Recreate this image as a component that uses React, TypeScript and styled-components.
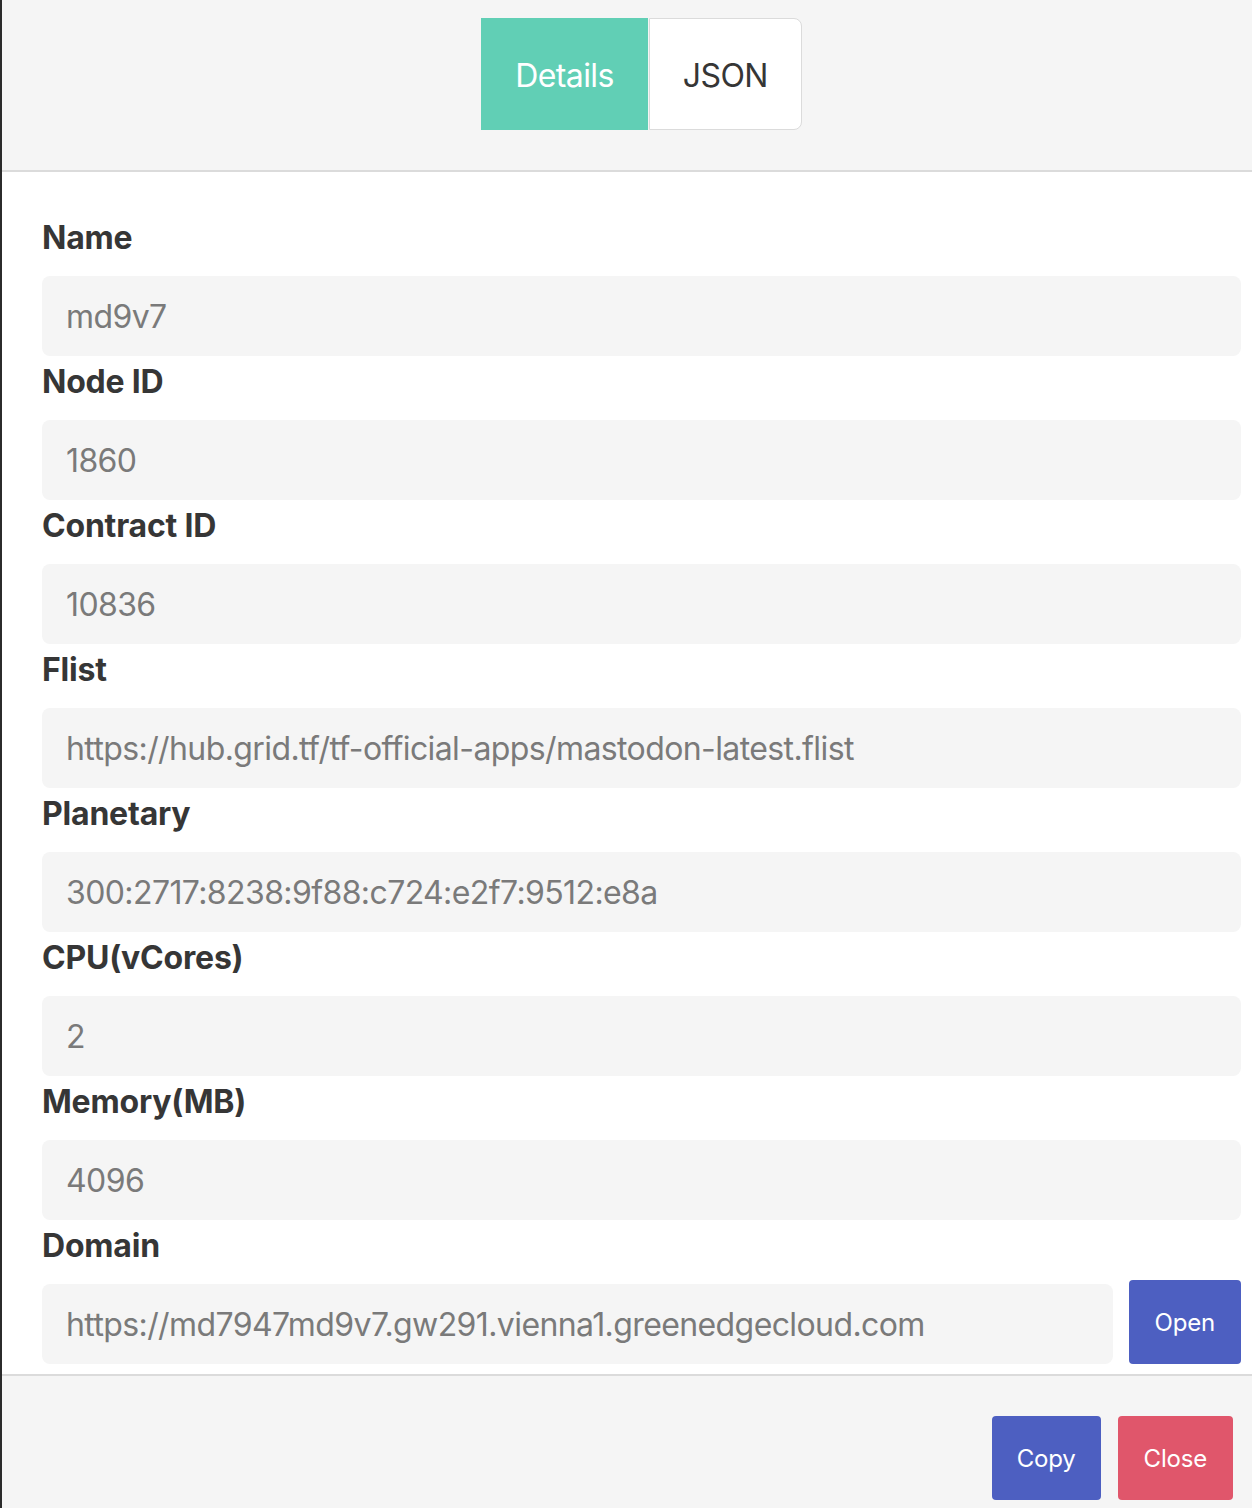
import React from 'react';
import styled, {createGlobalStyle} from 'styled-components';

const GlobalStyle = createGlobalStyle`
  html, body {
    margin: 0;
    padding: 0;
    background: #ffffff;
    overflow: hidden;
  }

  body {
    font-family: 'Inter', 'Noto Sans', sans-serif;
    color: #363636;
  }
`;

interface IField {
  label: string;
  value: string;
}

const fields: IField[] = [
  {label: 'Name', value: 'md9v7'},
  {label: 'Node ID', value: '1860'},
  {label: 'Contract ID', value: '10836'},
  {label: 'Flist', value: 'https://hub.grid.tf/tf-official-apps/mastodon-latest.flist'},
  {label: 'Planetary', value: '300:2717:8238:9f88:c724:e2f7:9512:e8a'},
  {label: 'CPU(vCores)', value: '2'},
  {label: 'Memory(MB)', value: '4096'},
];

const domain = 'https://md7947md9v7.gw291.vienna1.greenedgecloud.com';

const App = () => {
  return (
    <>
      <GlobalStyle />
      <ModalCard>
        <Head>
          <Tabs>
            <Tab $active>Details</Tab>
            <Tab>JSON</Tab>
          </Tabs>
        </Head>

        <Body>
          {fields.map((field) => (
            <Field key={field.label}>
              <Label>{field.label}</Label>
              <Input value={field.value} readOnly />
            </Field>
          ))}

          <Field>
            <Label>Domain</Label>
            <Addons>
              <Input value={domain} readOnly />
              <Button $color="#4d5fc1">Open</Button>
            </Addons>
          </Field>
        </Body>

        <Foot>
          <Button $color="#4d5fc1">Copy</Button>
          <Button $color="#e0566b">Close</Button>
        </Foot>
      </ModalCard>
    </>
  );
};

export default App;

// the card is wider than the window; its right edge is cut off like in the screenshot
const ModalCard = styled.div`
  display: flex;
  flex-direction: column;
  width: 1281px;
  height: 1508px;
  box-sizing: border-box;
  border-left: 2px solid #2b2b2b;
  overflow: hidden;
`;

const Head = styled.header`
  display: flex;
  justify-content: center;
  padding: 18px 0 40px;
  background: #f5f5f5;
  border-bottom: 2px solid #dbdbdb;
`;

const Tabs = styled.ul`
  display: flex;
  margin: 0;
  padding: 0;
  list-style: none;
`;

const Tab = styled.li<{$active?: boolean}>`
  display: flex;
  align-items: center;
  justify-content: center;
  height: 112px;
  box-sizing: border-box;
  padding: 3px 33px 0;
  font-size: 32px;
  letter-spacing: -0.6px;
  line-height: 1;
  color: ${({$active}) => ($active ? '#ffffff' : '#363636')};
  background: ${({$active}) => ($active ? '#61cfb5' : '#ffffff')};
  border: 1px solid ${({$active}) => ($active ? '#61cfb5' : '#dbdbdb')};
  border-radius: ${({$active}) => ($active ? '0' : '0 8px 8px 0')};

  &:not(:first-child) {
    margin-left: 1px;
  }
`;

const Body = styled.section`
  flex-shrink: 0;
  padding: 40px 40px 10px;
  background: #ffffff;
`;

const Field = styled.div`
  display: flex;
  flex-direction: column;
`;

const Label = styled.label`
  display: block;
  padding-top: 2px;
  margin-bottom: 14px;
  font-size: 32px;
  font-weight: 700;
  line-height: 48px;
  letter-spacing: -0.2px;
  color: #363636;
`;

// the Open button is a little taller than the input and pokes up into the label gap
const Addons = styled.div`
  display: flex;
  align-items: flex-end;
  gap: 16px;

  input {
    flex: 1;
  }

  button {
    margin-top: -4px;
  }
`;

const Input = styled.input`
  display: block;
  width: 100%;
  min-width: 0;
  height: 80px;
  flex-shrink: 0;
  box-sizing: border-box;
  padding: 0 24px;
  font-family: 'Inter', 'Noto Sans', sans-serif;
  font-size: 32px;
  letter-spacing: -0.6px;
  color: #7a7a7a;
  background: #f5f5f5;
  border: none;
  border-radius: 8px;
  outline: none;
`;

const Button = styled.button<{$color: string}>`
  flex-shrink: 0;
  height: 84px;
  padding: 0 26px;
  font-family: 'Inter', 'Noto Sans', sans-serif;
  font-size: 24px;
  letter-spacing: -0.2px;
  color: #ffffff;
  background: ${({$color}) => $color};
  border: none;
  border-radius: 4px;
  cursor: pointer;
`;

const Foot = styled.footer`
  display: flex;
  flex: 1;
  justify-content: flex-end;
  gap: 17px;
  box-sizing: border-box;
  padding: 40px 48px 0 42px;
  background: #f5f5f5;
  border-top: 2px solid #dbdbdb;

  button:first-child {
    padding: 0 25px;
  }
`;
